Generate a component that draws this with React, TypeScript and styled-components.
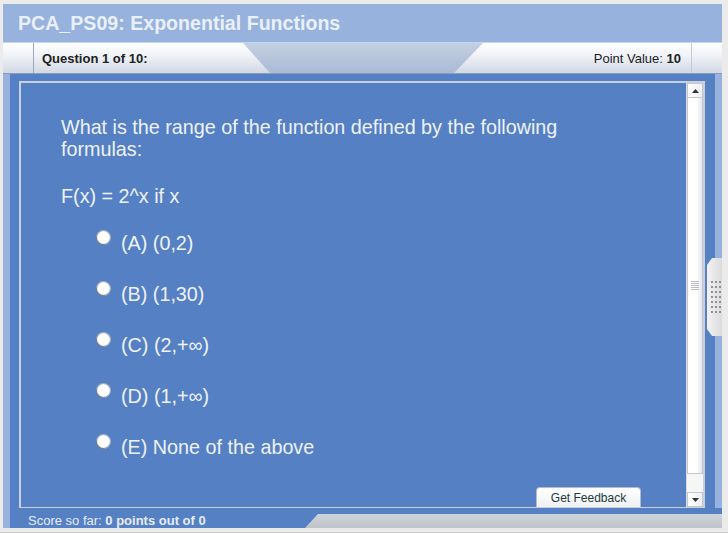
import React from "react";
import styled, { createGlobalStyle } from "styled-components";

const GlobalStyle = createGlobalStyle`
  html, body { margin: 0; padding: 0; }
  body { font-family: "Liberation Sans", Arial, sans-serif; }
`;

const COLORS = {
  blue: "#5580c3",
  light: "#97b2dc",
  text: "#eef2fa",
  dark: "#222",
};

const Page = styled.div`
  width: 728px;
  height: 533px;
  box-sizing: border-box;
  padding: 4px 6px 5px 3px;
  background: #ebebeb;
  border-bottom: 1px solid #ccc;
`;

const Frame = styled.div`
  display: flex;
  flex-direction: column;
  height: 524px;
`;

const TitleBar = styled.div`
  height: 38px;
  background: ${COLORS.light};
  display: flex;
  align-items: center;
  padding-left: 15px;
  color: #eaf0f9;
  font-size: 19.6px;
  font-weight: bold;
`;

const TabBar = styled.div`
  height: 32px;
  display: flex;
  background: linear-gradient(#c4d0e2, #a9bad4);
  border-top: 1px solid #c9d5e8;
  border-bottom: 1px solid #8a9cba;
  box-sizing: border-box;
`;

const tabFace = `
  background: linear-gradient(#ffffff, #eef1f6 45%, #d2d9e4);
  display: flex;
  align-items: center;
  font-size: 13px;
  color: ${COLORS.dark};
`;

const Cap = styled.div<{ $end?: boolean }>`
  ${tabFace}
  width: 30px;
  border-right: ${(p) => (p.$end ? "none" : "1px solid #9ea8b8")};
  border-left: ${(p) => (p.$end ? "1px solid #c4cad4" : "none")};
`;

const Tab = styled.div<{ $side: "left" | "right" }>`
  ${tabFace}
  width: ${(p) => (p.$side === "left" ? "236px" : "237px")};
  padding: ${(p) => (p.$side === "left" ? "0 0 0 8px" : "0 10px 0 0")};
  justify-content: ${(p) => (p.$side === "left" ? "flex-start" : "flex-end")};
  box-sizing: border-box;
  clip-path: ${(p) =>
    p.$side === "left"
      ? "polygon(0 0, calc(100% - 27px) 0, 100% 100%, 0 100%)"
      : "polygon(29px 0, 100% 0, 100% 100%, 0 100%)"};
`;

const Spacer = styled.div`
  flex: 1;
`;

const Body = styled.div`
  position: relative;
  height: 434px;
  display: flex;
`;

const Strip = styled.div<{ $w: number }>`
  width: ${(p) => p.$w}px;
  background: ${COLORS.light};
`;

const BlueArea = styled.div`
  flex: 1;
  background: ${COLORS.blue};
  padding: 7px 10px 0 9px;
`;

const Panel = styled.div`
  height: 427px;
  box-sizing: border-box;
  border: 2px solid #c9d0dc;
  border-bottom-width: 1px;
  display: flex;
`;

const Content = styled.div`
  flex: 1;
  display: flex;
  flex-direction: column;
  padding: 33px 0 0 40px;
  color: ${COLORS.text};
  font-size: 19.75px;
  line-height: 22px;
`;

const Question = styled.p`
  margin: 0;
  width: 560px;
`;

const Formula = styled.p`
  margin: 25px 0 0;
`;

const Options = styled.div`
  display: flex;
  flex-direction: column;
  gap: 29px;
  margin: 25px 0 0 36px;
`;

const Option = styled.label`
  display: flex;
  align-items: flex-start;
  gap: 11px;
`;

const Radio = styled.span`
  width: 13px;
  height: 13px;
  margin-top: -1px;
  border-radius: 50%;
  background: radial-gradient(circle at 55% 40%, #fff 55%, #e6e6e6);
  box-shadow: -1px 1px 0 #6f7a88, 0 0 0 1px #a9b2c0;
`;

const FeedbackButton = styled.button`
  margin: auto 45px 0 auto;
  width: 105px;
  height: 20px;
  padding: 0;
  border: 1px solid #b3bcc9;
  border-bottom: none;
  border-radius: 4px 4px 0 0;
  background: linear-gradient(#ffffff, #eef0f3);
  color: #1e3a3c;
  font-family: "Liberation Sans", Arial, sans-serif;
  font-size: 12px;
`;

const ScrollBar = styled.div`
  width: 16px;
  display: flex;
  flex-direction: column;
  background: #f6f6f6;
  border-left: 1px solid #d8dce2;
`;

const ScrollButton = styled.div`
  height: 15px;
  background: linear-gradient(90deg, #fff, #eceef0);
  border: 1px solid #c4c8ce;
  display: flex;
  align-items: center;
  justify-content: center;
  box-sizing: border-box;
`;

const Thumb = styled.div`
  height: 376px;
  background: linear-gradient(90deg, #ffffff 60%, #e4e6ea);
  border: 1px solid #c4c8ce;
  border-top: none;
  box-sizing: border-box;
  display: flex;
  align-items: center;
  justify-content: center;
`;

const Track = styled.div`
  flex: 1;
`;

const Handle = styled.div`
  position: absolute;
  right: 0;
  top: 184px;
  width: 15px;
  height: 78px;
  background: linear-gradient(90deg, #f2f2f2, #dcdcdc);
  clip-path: polygon(5px 0, 100% 0, 100% 100%, 5px 100%, 0 calc(100% - 7px), 0 7px);
  display: grid;
  grid-template-columns: repeat(3, 2px);
  grid-auto-rows: 2px;
  column-gap: 2px;
  row-gap: 3px;
  align-content: center;
  justify-content: center;
  padding-left: 2px;
  box-sizing: border-box;
`;

const Dot = styled.span`
  background: #8d9096;
`;

const Footer = styled.div`
  height: 20px;
  display: flex;
  background: ${COLORS.blue};
`;

const Score = styled.div`
  flex: 1;
  padding: 5px 0 0 18px;
  color: #e6ecf6;
  font-size: 13px;
`;

const GrayTab = styled.div`
  width: 417px;
  height: 14px;
  align-self: flex-end;
  background: linear-gradient(#cfd3da, #bfc3ca);
  clip-path: polygon(13px 0, 100% 0, 100% 100%, 0 100%);
`;

const options = [
  "(A) (0,2)",
  "(B) (1,30)",
  "(C) (2,+\u221e)",
  "(D) (1,+\u221e)",
  "(E) None of the above",
];

const Arrow = ({ up }: { up?: boolean }) => (
  <svg width="7" height="4" viewBox="0 0 7 4">
    <path d={up ? "M0 4 L3.5 0 L7 4 Z" : "M0 0 L7 0 L3.5 4 Z"} fill="#333" />
  </svg>
);

const Grip = () => (
  <svg width="8" height="9" viewBox="0 0 8 9">
    {[0, 2, 4, 6, 8].map((y) => (
      <rect key={y} x="0" y={y} width="8" height="1" fill="#b8bcc2" />
    ))}
  </svg>
);

export default function App() {
  return (
    <Page>
      <GlobalStyle />
      <Frame>
        <TitleBar>PCA_PS09: Exponential Functions</TitleBar>
        <TabBar>
          <Cap />
          <Tab $side="left">
            <b>Question 1 of 10:</b>
          </Tab>
          <Spacer />
          <Tab $side="right">
            Point Value:&nbsp;<b>10</b>
          </Tab>
          <Cap $end />
        </TabBar>
        <Body>
          <Strip $w={7} />
          <BlueArea>
            <Panel>
              <Content>
                <Question>
                  What is the range of the function defined by the following formulas:
                </Question>
                <Formula>F(x) = 2^x if x</Formula>
                <Options>
                  {options.map((o) => (
                    <Option key={o}>
                      <Radio />
                      {o}
                    </Option>
                  ))}
                </Options>
                <FeedbackButton>Get Feedback</FeedbackButton>
              </Content>
              <ScrollBar>
                <ScrollButton>
                  <Arrow up />
                </ScrollButton>
                <Thumb>
                  <Grip />
                </Thumb>
                <Track />
                <ScrollButton>
                  <Arrow />
                </ScrollButton>
              </ScrollBar>
            </Panel>
          </BlueArea>
          <Strip $w={7} />
          <Handle>
            {Array.from({ length: 21 }).map((_, i) => (
              <Dot key={i} />
            ))}
          </Handle>
        </Body>
        <Footer>
          <Strip $w={7} />
          <Score>
            Score so far: <b>0 points out of 0</b>
          </Score>
          <GrayTab />
        </Footer>
      </Frame>
    </Page>
  );
}
